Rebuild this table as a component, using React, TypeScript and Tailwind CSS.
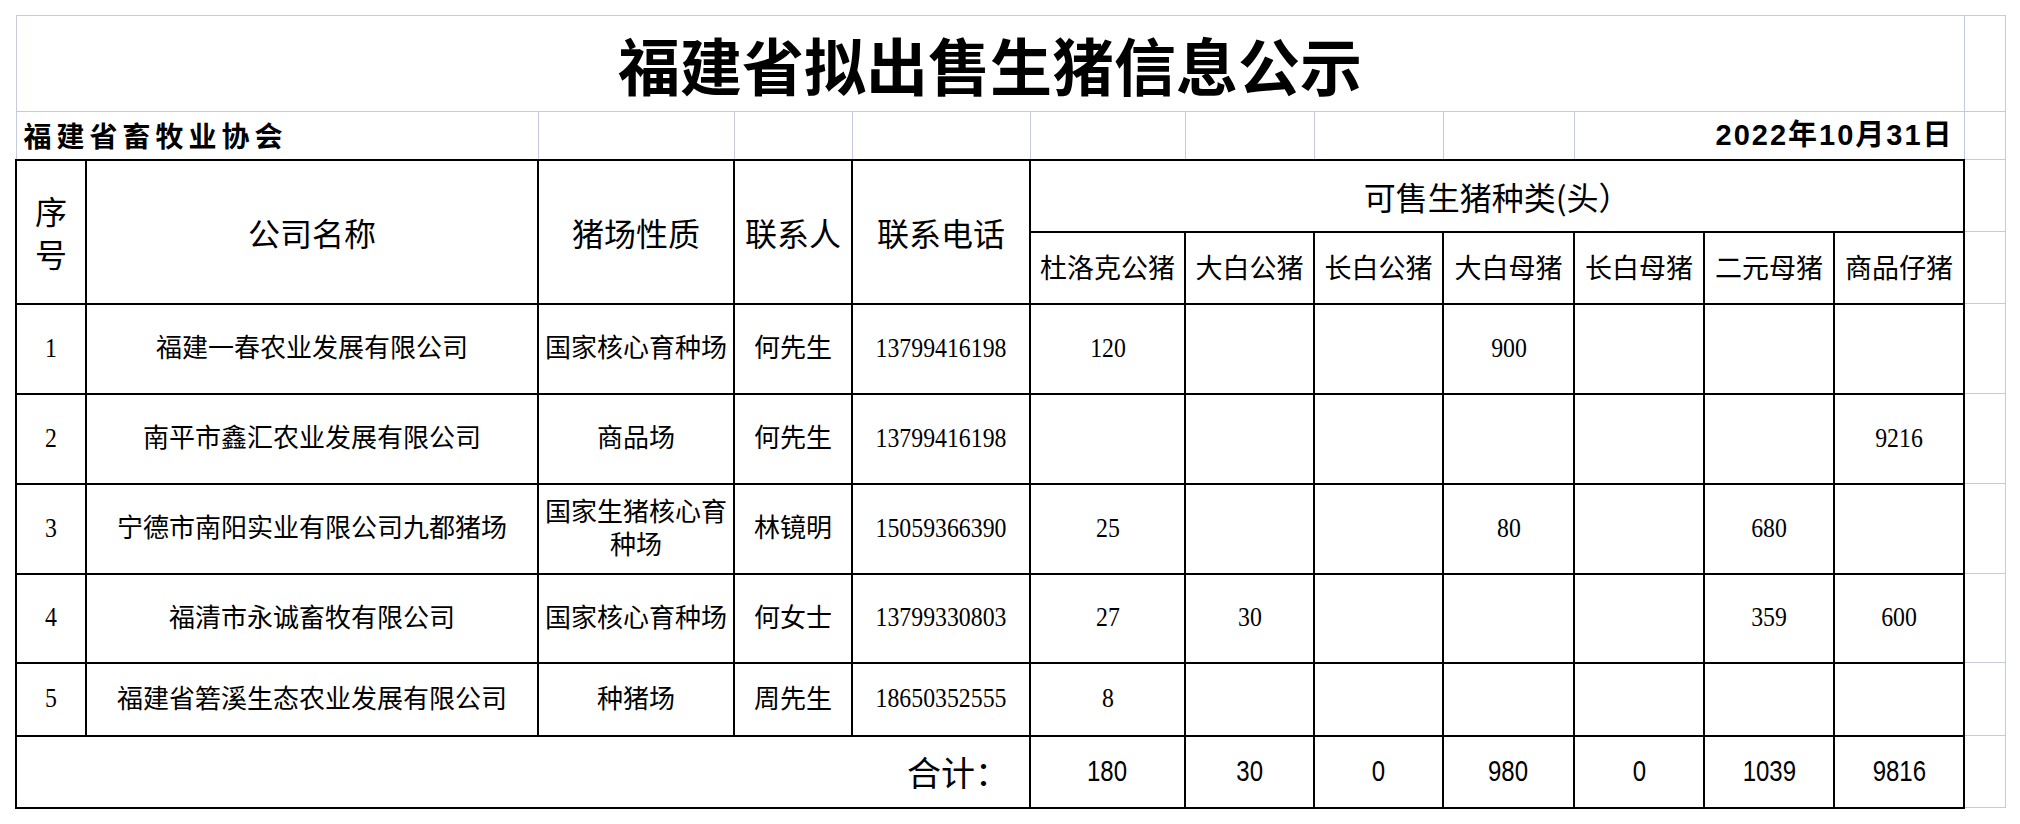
import React from "react";

const grid = "border border-[#c5cbdc]";
const cell = "border-2 border-black text-center align-middle";
const serif = "font-['Liberation_Serif','Noto_Sans_CJK_SC',serif]";
const sans = "font-['Noto_Sans_CJK_SC','Liberation_Sans',sans-serif]";

type Row = {
  no: string;
  name: string;
  kind: string;
  contact: string;
  phone: string;
  counts: string[];
};

const rows: Row[] = [
  { no: "1", name: "福建一春农业发展有限公司", kind: "国家核心育种场", contact: "何先生", phone: "13799416198", counts: ["120", "", "", "900", "", "", ""] },
  { no: "2", name: "南平市鑫汇农业发展有限公司", kind: "商品场", contact: "何先生", phone: "13799416198", counts: ["", "", "", "", "", "", "9216"] },
  { no: "3", name: "宁德市南阳实业有限公司九都猪场", kind: "国家生猪核心育种场", contact: "林镜明", phone: "15059366390", counts: ["25", "", "", "80", "", "680", ""] },
  { no: "4", name: "福清市永诚畜牧有限公司", kind: "国家核心育种场", contact: "何女士", phone: "13799330803", counts: ["27", "30", "", "", "", "359", "600"] },
  { no: "5", name: "福建省箬溪生态农业发展有限公司", kind: "种猪场", contact: "周先生", phone: "18650352555", counts: ["8", "", "", "", "", "", ""] },
];

const rowHeights = ["h-[90px]", "h-[90px]", "h-[90px]", "h-[89px]", "h-[73px]"];

const kinds = ["杜洛克公猪", "大白公猪", "长白公猪", "大白母猪", "长白母猪", "二元母猪", "商品仔猪"];
const totals = ["180", "30", "0", "980", "0", "1039", "9816"];

function Num({ v }: { v: string }) {
  return <span className="inline-block scale-x-85 text-[28px] leading-none">{v}</span>;
}

export default function App() {
  return (
    <div className="w-[2020px] h-[824px] bg-white pl-[15px] pt-[15px] text-black">
      <table className="table-fixed border-collapse w-[1989px]">
        <colgroup>
          <col className="w-[70px]" />
          <col className="w-[452px]" />
          <col className="w-[196px]" />
          <col className="w-[118px]" />
          <col className="w-[178px]" />
          <col className="w-[155px]" />
          <col className="w-[129px]" />
          <col className="w-[129px]" />
          <col className="w-[131px]" />
          <col className="w-[130px]" />
          <col className="w-[130px]" />
          <col className="w-[130px]" />
          <col className="w-[41px]" />
        </colgroup>
        <tbody>
          {/* title */}
          <tr className="h-[96px]">
            <td colSpan={12} className={`${grid} text-center align-middle ${sans} text-[62px] font-bold leading-none`}>
              福建省拟出售生猪信息公示
            </td>
            <td className={grid}></td>
          </tr>

          {/* org + date */}
          <tr className="h-[48px]">
            <td colSpan={2} className={`${grid} pl-[7px] align-middle ${sans} text-[28px] font-bold tracking-[5px] leading-none`}>
              福建省畜牧业协会
            </td>
            <td className={grid}></td>
            <td className={grid}></td>
            <td className={grid}></td>
            <td className={grid}></td>
            <td className={grid}></td>
            <td className={grid}></td>
            <td className={grid}></td>
            <td colSpan={3} className={`${grid} pr-[10px] text-right align-middle font-['Liberation_Sans','Noto_Sans_CJK_SC',sans-serif] text-[29px] font-bold tracking-[2px] leading-none`}>
              2022年10月31日
            </td>
            <td className={grid}></td>
          </tr>

          {/* header */}
          <tr className="h-[72px]">
            <td rowSpan={2} className={`${cell} ${sans} text-[32px] leading-[43px]`}>
              序<br />号
            </td>
            <td rowSpan={2} className={`${cell} ${sans} text-[32px]`}>公司名称</td>
            <td rowSpan={2} className={`${cell} ${sans} text-[32px]`}>猪场性质</td>
            <td rowSpan={2} className={`${cell} ${sans} text-[32px]`}>联系人</td>
            <td rowSpan={2} className={`${cell} ${sans} text-[32px]`}>联系电话</td>
            <td colSpan={7} className={`${cell} ${sans} text-[32px]`}>可售生猪种类(头）</td>
            <td className={grid}></td>
          </tr>
          <tr className="h-[72px]">
            {kinds.map((k) => (
              <td key={k} className={`${cell} ${sans} text-[27px] whitespace-nowrap`}>{k}</td>
            ))}
            <td className={grid}></td>
          </tr>

          {/* data */}
          {rows.map((r, i) => (
            <tr key={r.no} className={rowHeights[i]}>
              <td className={`${cell} ${serif}`}><Num v={r.no} /></td>
              <td className={`${cell} ${serif} text-[26px]`}>{r.name}</td>
              <td className={`${cell} ${serif} text-[26px] leading-[33px] px-1`}>{r.kind}</td>
              <td className={`${cell} ${serif} text-[26px]`}>{r.contact}</td>
              <td className={`${cell} ${serif}`}><Num v={r.phone} /></td>
              {r.counts.map((c, j) => (
                <td key={j} className={`${cell} ${serif}`}>{c && <Num v={c} />}</td>
              ))}
              <td className={grid}></td>
            </tr>
          ))}

          {/* totals */}
          <tr className="h-[72px]">
            <td colSpan={5} className={`border-2 border-black text-right align-middle pr-[20px] ${sans} text-[34px]`}>
              合计：
            </td>
            {totals.map((t, j) => (
              <td key={j} className={`${cell} font-['Liberation_Sans',sans-serif]`}>
                <span className="inline-block scale-x-80 text-[30px] leading-none">{t}</span>
              </td>
            ))}
            <td className={grid}></td>
          </tr>
        </tbody>
      </table>
    </div>
  );
}
